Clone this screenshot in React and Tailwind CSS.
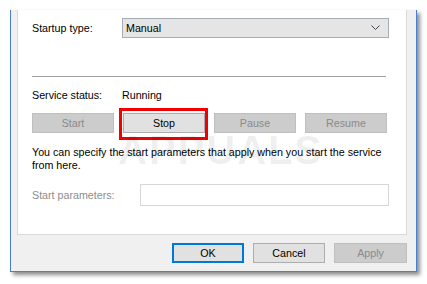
import React from 'react';

const font = { fontFamily: '"Liberation Sans", Arial, sans-serif' };

const Btn = ({ children, disabled, className = '' }) => (
  <div
    className={`h-[20px] flex items-center justify-center border text-[10.7px] ${
      disabled ? 'bg-[#cccccc] border-[#bfbfbf] text-[#8a8a8a]' : 'bg-[#e1e1e1] border-[#adadad] text-black'
    } ${className}`}
  >
    {children}
  </div>
);

export default function App() {
  return (
    <div className="w-[427px] h-[284px] bg-white pt-[10px] pl-[10px] overflow-hidden" style={font}>
      {/* Window */}
      <div className="relative w-[407px] h-[262px] bg-[#f0f0f0] border-x border-b border-[#4a7fd0] pl-[6px] pr-[9px] shadow-[3px_3px_4px_rgba(0,0,0,0.45)]">
        {/* Tab panel */}
        <div className="relative bg-white border-x border-b border-[#d9d9d9] h-[225px] pt-[8px] pl-[14px] text-[10.7px] text-black">
          <div className="flex items-center h-[20px]">
            <div className="w-[90px]">Startup type:</div>
            <div className="w-[267px] h-[20px] bg-[#e5e5e5] border border-[#a3adb8] flex items-center justify-between pl-[3px] pr-[8px]">
              <span>Manual</span>
              <svg width="9" height="6" viewBox="0 0 9 6">
                <polyline points="0.5,0.5 4.5,4.5 8.5,0.5" fill="none" stroke="#444" strokeWidth="1" />
              </svg>
            </div>
          </div>

          <div className="mt-[38px] w-[354px] h-px bg-[#a0a0a0]" />

          <div className="mt-[11px] flex items-center h-[14px]">
            <div className="w-[90px]">Service status:</div>
            <div>Running</div>
          </div>

          <div className="mt-[11px] flex gap-[9px]">
            <Btn disabled className="w-[82px]">Start</Btn>
            <div className="relative">
              <Btn className="w-[82px]">Stop</Btn>
              <div className="absolute -left-[4px] -top-[5px] w-[89px] h-[32px] border-[3px] border-[#f00000]" />
            </div>
            <Btn disabled className="w-[82px]">Pause</Btn>
            <Btn disabled className="w-[82px] text-[#6e6e6e]">Resume</Btn>
          </div>

          <p className="mt-[13px] leading-[13px]">
            You can specify the start parameters that apply when you start the service
            <br />
            from here.
          </p>

          <div className="mt-[12px] flex items-center h-[22px]">
            <div className="w-[108px] text-[#8d8d8d]">Start parameters:</div>
            <div className="w-[249px] h-[22px] border border-[#d6d6d6] bg-white" />
          </div>

          {/* watermark */}
          <div className="absolute left-[100px] top-[110px] text-[40px] font-bold tracking-[2px] text-black/[0.07] pointer-events-none select-none">
            APPUALS
          </div>
        </div>

        <div className="mt-[8px] flex justify-end gap-[9px] text-[10.7px]">
          <div className="w-[72px] h-[20px] flex items-center justify-center bg-[#e1e1e1] border-2 border-[#0078d7]">OK</div>
          <Btn className="w-[72px]">Cancel</Btn>
          <Btn disabled className="w-[73px]">Apply</Btn>
        </div>
      </div>
    </div>
  );
}
